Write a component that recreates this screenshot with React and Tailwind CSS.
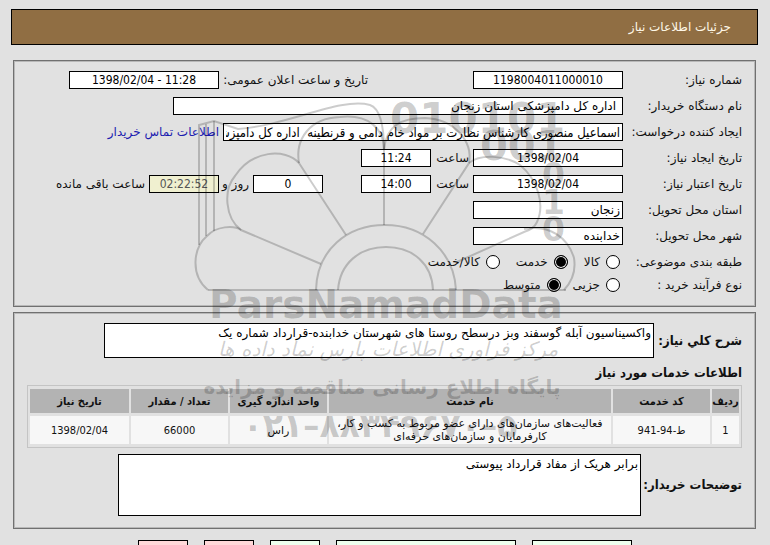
const field = "h-[18px] min-w-0 border border-black px-[2px] leading-4";
const condensed = "font-['DejaVu_Sans_Condensed','DejaVu_Sans',sans-serif]";
const digits = `text-center ${condensed}`;
const strong = `text-[13px] font-bold ${condensed}`;

function Row({ label, htmlFor, children }) {
  return (
    <div className="flex items-center gap-1">
      <label htmlFor={htmlFor} className="w-[115px] shrink-0 whitespace-nowrap">{label}</label>
      {children}
    </div>
  );
}

function Field({ id, value, tone = "bg-white text-black", size = "text-[12px]", className = "", ...rest }) {
  return <input id={id} type="text" defaultValue={value} className={`${field} ${tone} ${size} ${className}`} {...rest} />;
}

function Option({ name, label, checked }) {
  return (
    <label className="flex items-center gap-1.5 whitespace-nowrap">
      <input
        type="radio"
        name={name}
        defaultChecked={checked}
        className="size-3.5 shrink-0 appearance-none rounded-full border border-black bg-white checked:bg-black checked:shadow-[inset_0_0_0_1px_white]"
      />
      {label}
    </label>
  );
}

function Panel({ className = "", children }) {
  return (
    <section className={`mx-[2px] border border-[#707070] shadow-[inset_0_0_0_1px_#b8b8b8] ${className}`}>{children}</section>
  );
}

/* Site mark laid over the whole form */
function Watermark() {
  return (
    <svg
      className="pointer-events-none absolute left-1/2 top-[90px] h-[370px] w-[400px] -translate-x-1/2"
      viewBox="185 90 400 370"
      direction="ltr"
      aria-hidden="true"
    >
      <g fill="none" stroke="#000" strokeOpacity="0.2" strokeWidth="2">
        <path d="M208 290 H566" />
        <path d="M316 290 C317 250 347 225 385 225 C424 225 454 252 456 290" />
        <path d="M338 290 C340 263 360 247 386 247 C413 247 432 264 433 290" />
        <path d="M208 290 C190 275 193 248 207 236 C216 226 234 225 241 230 L321 264" />
        <path d="M241 230 C225 218 223 190 235 176 C252 150 285 148 299 163 L346 235" />
        <path d="M299 163 C295 140 309 118 340 117 C368 114 384 128 384 150 V225" />
        <path d="M384 150 C386 125 402 118 425 118 C455 119 473 142 469 163 L423 234" />
        <path d="M469 163 C480 154 505 155 520 165 C538 180 545 205 537 222 Q534 229 524 232 L457 262" />
        <path d="M524 229 C550 224 568 238 574 258 Q577 276 564 290" />
        <path d="M199 245 V125 L214 121 L238 129 C290 125 340 97 370 105 Q384 110 384 150" />
        <path d="M206 236 V124 M214 231 V121" />
      </g>
      <g fill="#000" fillOpacity="0.2" fontFamily="DejaVu Sans, sans-serif" fontWeight="700">
        <text x="390" y="133" fontSize="42" textAnchor="start">010101</text>
        <text x="480" y="160" fontSize="40" textAnchor="start">001</text>
        <text x="542" y="187" fontSize="33" textAnchor="start">0</text>
        <text x="542" y="214" fontSize="33" textAnchor="start">1</text>
        <text x="542" y="241" fontSize="33" textAnchor="start">0</text>
        <text x="386" y="318" fontSize="39" textAnchor="middle">ParsNamadData</text>
      </g>
      <g fill="#000" fillOpacity="0.2" fontFamily="DejaVu Sans, sans-serif" textAnchor="middle">
        <text x="388" y="356" fontSize="20" fontStyle="italic" direction="rtl">مرکز فرآوری اطلاعات پارس نماد داده ها</text>
        <text x="382" y="394" fontSize="20" fontWeight="700" direction="rtl">پایگاه اطلاع رسانی مناقصه و مزایده</text>
        <text x="380" y="437" fontSize="33" fontWeight="700">۰۲۱–۸۸۳۴۹۶۷۰–۵</text>
      </g>
    </svg>
  );
}

const columns = [
  { title: "ردیف", width: "w-[27px]", value: "1", numeric: true },
  { title: "کد خدمت", width: "w-[97px]", value: "ط-94-941", numeric: true },
  { title: "نام خدمت", width: "", value: "فعالیت‌های سازمان‌های دارای عضو مربوط به کسب و کار، کارفرمایان و سازمان‌های حرفه‌ای" },
  { title: "واحد اندازه گیری", width: "w-[97px]", value: "راس" },
  { title: "تعداد / مقدار", width: "w-[97px]", value: "66000", numeric: true },
  { title: "تاریخ نیاز", width: "w-[99px]", value: "1398/02/04", numeric: true },
];

export default function App() {
  return (
    <div
      dir="rtl"
      className="relative h-screen overflow-hidden bg-[#e1e1e1] pl-[11px] pr-3 pt-[9px] font-['DejaVu_Sans',sans-serif] text-[12px] leading-[18px] text-[#111]"
    >
      <header className="flex h-9 items-center border border-black bg-[#906e43] px-[26px] text-[#fff8e8]">
        <h1>جزئیات اطلاعات نیاز</h1>
      </header>

      <Panel className="mt-[15px] flex h-[247px] flex-col gap-2 px-[13px] pt-[10px]">
        <Row label="شماره نیاز:" htmlFor="number">
          <Field id="number" value="1198004011000010" className={`w-[150px] ${digits}`} />
          <label htmlFor="announced" className="ms-[101px] w-[145px] whitespace-nowrap">تاریخ و ساعت اعلان عمومی:</label>
          <Field id="announced" value="1398/02/04 - 11:28" dir="ltr" className={`w-[150px] ${digits}`} />
        </Row>
        <Row label="نام دستگاه خریدار:" htmlFor="buyer">
          <Field id="buyer" value="اداره کل دامپزشکی استان زنجان" className="w-[450px] ps-1.5" />
        </Row>
        <Row label="ایجاد کننده درخواست:" htmlFor="creator">
          <Field
            id="creator"
            value="اسماعیل منصوری کارشناس نظارت بر مواد خام دامی و قرنطینه  اداره کل دامپزشکی"
            size="text-[13px]"
            className={`w-[400px] ${condensed}`}
          />
          <a href="#contact" className="whitespace-nowrap text-[#1c1cb0]">اطلاعات تماس خریدار</a>
        </Row>
        <Row label="تاریخ ایجاد نیاز:" htmlFor="created">
          <Field id="created" value="1398/02/04" className={`w-[150px] ${digits}`} />
          <label htmlFor="createdTime" className="w-[34px]">ساعت</label>
          <Field id="createdTime" value="11:24" className={`w-[70px] ${digits}`} />
        </Row>
        <Row label="تاریخ اعتبار نیاز:" htmlFor="valid">
          <Field id="valid" value="1398/02/04" className={`w-[150px] ${digits}`} />
          <label htmlFor="validTime" className="w-[34px]">ساعت</label>
          <Field id="validTime" value="14:00" className={`w-[70px] ${digits}`} />
          <Field id="days" value="0" className={`ms-[34px] w-[70px] ${digits}`} />
          <label htmlFor="days" className="w-[26px] whitespace-nowrap">روز و</label>
          <Field id="left" value="02:22:52" tone="bg-[#f0f0d0] text-[#555]" className={`w-[70px] ${digits}`} />
          <label htmlFor="left" className="whitespace-nowrap">ساعت باقی مانده</label>
        </Row>
        <Row label="استان محل تحویل:" htmlFor="province">
          <Field id="province" value="زنجان" className="w-[150px]" />
        </Row>
        <Row label="شهر محل تحویل:" htmlFor="city">
          <Field id="city" value="خدابنده" className="w-[150px]" />
        </Row>
        <div className="flex flex-col gap-[5px]">
          <div className="flex items-center">
            <span className="w-[122px]">طبقه بندی موضوعی:</span>
            <div className="flex gap-4">
              <Option name="category" label="کالا" />
              <Option name="category" label="خدمت" checked />
              <Option name="category" label="کالا/خدمت" />
            </div>
          </div>
          <div className="flex items-center">
            <span className="w-[122px]">نوع فرآیند خرید :</span>
            <div className="flex gap-3">
              <Option name="process" label="جزیی" />
              <Option name="process" label="متوسط" checked />
            </div>
          </div>
        </div>
      </Panel>

      <Panel className="mt-[5px] flex flex-col px-[13px] pb-3 pt-[10px]">
        <div className="flex items-center gap-1">
          <label htmlFor="summary" className={`w-[84px] whitespace-nowrap ${strong}`}>شرح کلي نیاز:</label>
          <textarea
            id="summary"
            className="h-[35px] w-[550px] resize-none border border-black bg-white px-[2px] text-black"
            defaultValue="واکسیناسیون آبله گوسفند وبز درسطح روستا های شهرستان خدابنده-قرارداد شماره یک"
          />
        </div>
        <h2 className={`mt-1.5 ${strong}`}>اطلاعات خدمات مورد نیاز</h2>
        <table className="mt-[3px] w-full table-fixed border-separate border-spacing-x-[2px] border-spacing-y-[3px] border border-[#c4c4c4] text-center text-[11px] leading-[13px]">
          <thead>
            <tr className="h-[24px]">
              {columns.map((c) => (
                <th key={c.title} className={`whitespace-nowrap bg-[#b3b3b3] p-0 font-bold ${condensed} ${c.width}`}>
                  {c.title}
                </th>
              ))}
            </tr>
          </thead>
          <tbody>
            <tr className="h-[28px]">
              {columns.map((c) => (
                <td key={c.title} className={`bg-[#f7f7f7] px-2 py-0 ${c.numeric ? digits : ""}`}>{c.value}</td>
              ))}
            </tr>
          </tbody>
        </table>
        <div className="mt-1.5 flex items-center gap-[6px]">
          <label htmlFor="notes" className={`w-[95px] whitespace-nowrap ${strong}`}>توضیحات خریدار:</label>
          <textarea
            id="notes"
            className="h-[62px] w-[523px] resize-none border border-black bg-white px-[2px] text-black"
            defaultValue="برابر هریک از مفاد قرارداد پیوستی"
          />
        </div>
      </Panel>

      <div className="mt-[11px] flex justify-center gap-4">
        <button type="button" className="h-7 w-[100px] border border-black bg-[#eeffee]" />
        <button type="button" className="h-7 w-[180px] border border-black bg-[#eeffee]" />
        <button type="button" className="h-7 w-[50px] border border-black bg-[#eeffee]" />
        <button type="button" className="h-7 w-[50px] border border-black bg-[#ffd9d9]" />
        <button type="button" className="h-7 w-[50px] border border-black bg-[#ffd9d9]" />
      </div>

      <Watermark />
    </div>
  );
}
